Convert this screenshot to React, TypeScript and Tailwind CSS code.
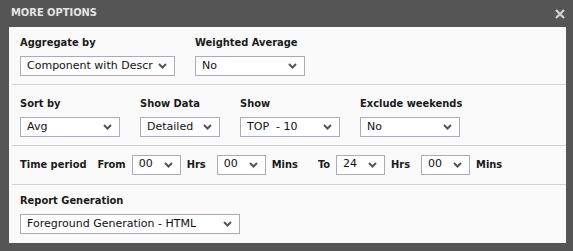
import { ReactNode } from "react";

function Chevron() {
  return (
    <svg width="9" height="6" viewBox="0 0 9 6" className="shrink-0">
      <path d="M1 1 L4.5 4.5 L8 1" fill="none" stroke="#555" strokeWidth="2" />
    </svg>
  );
}

function Select({ value, width, top }: { value: string; width: string; top?: boolean }) {
  return (
    <div
      className={`${width} h-[20px] flex justify-between border border-[#a9adbb] bg-white pl-[6px] pr-[7px] font-['DejaVu_Sans',sans-serif] text-[11px] font-normal text-[#111] ${
        top ? "items-start leading-[15px]" : "items-center"
      }`}
    >
      <span className="whitespace-pre overflow-hidden">{value}</span>
      <span className={top ? "self-center" : ""}>
        <Chevron />
      </span>
    </div>
  );
}

function Field({ label, children }: { label: string; children: ReactNode }) {
  return (
    <div className="flex flex-col gap-[6px]">
      <span className="text-[11px] font-bold leading-[14px] text-[#1a1a1a]">{label}</span>
      {children}
    </div>
  );
}

function Divider() {
  return <div className="ml-[3px] h-px bg-[#d2d2d2]" />;
}

export default function App() {
  return (
    <div className="w-[573px] h-[251px] bg-[#555555] flex flex-col pl-[9px] pr-[7px] pb-[8px] font-['DejaVu_Sans_Condensed','DejaVu_Sans',sans-serif]">
      {/* Title bar */}
      <div className="h-[27px] flex items-center justify-between pl-[2px] pr-[1px]">
        <span className="text-[11px] font-bold text-[#e4e4e4]">MORE OPTIONS</span>
        <svg width="10" height="10" viewBox="0 0 10 10">
          <path d="M1 1 L9 9 M9 1 L1 9" stroke="#cfcfcf" strokeWidth="2.4" />
        </svg>
      </div>

      {/* Panel */}
      <div className="flex-1 bg-[#fafafa] flex flex-col">
        <div className="flex gap-[20px] pl-[11px] pt-[9px] pb-[8px]">
          <Field label="Aggregate by">
            <Select value="Component with Descr" width="w-[155px]" />
          </Field>
          <Field label="Weighted Average">
            <Select value="No" width="w-[110px]" />
          </Field>
        </div>
        <Divider />

        <div className="flex gap-[20px] pl-[11px] pt-[12px] pb-[8px]">
          <Field label="Sort by">
            <Select value="Avg" width="w-[100px]" />
          </Field>
          <Field label="Show Data">
            <Select value="Detailed" width="w-[80px]" />
          </Field>
          <Field label="Show">
            <Select value="TOP  - 10" width="w-[100px]" />
          </Field>
          <Field label="Exclude weekends">
            <Select value="No" width="w-[100px]" />
          </Field>
        </div>
        <Divider />

        <div className="flex items-center pl-[11px] py-[9px] text-[11px] font-bold text-[#1a1a1a]">
          <span>Time period</span>
          <span className="ml-[11px] mr-[6px]">From</span>
          <Select value="00" width="w-[49px]" top />
          <span className="ml-[6px] mr-[11px]">Hrs</span>
          <Select value="00" width="w-[49px]" top />
          <span className="ml-[6px]">Mins</span>
          <span className="ml-[20px] mr-[6px]">To</span>
          <Select value="24" width="w-[49px]" top />
          <span className="ml-[6px] mr-[11px]">Hrs</span>
          <Select value="00" width="w-[49px]" top />
          <span className="ml-[6px]">Mins</span>
        </div>
        <Divider />

        <div className="flex pl-[11px] pt-[9px]">
          <Field label="Report Generation">
            <Select value="Foreground Generation - HTML" width="w-[220px]" />
          </Field>
        </div>
      </div>
    </div>
  );
}
